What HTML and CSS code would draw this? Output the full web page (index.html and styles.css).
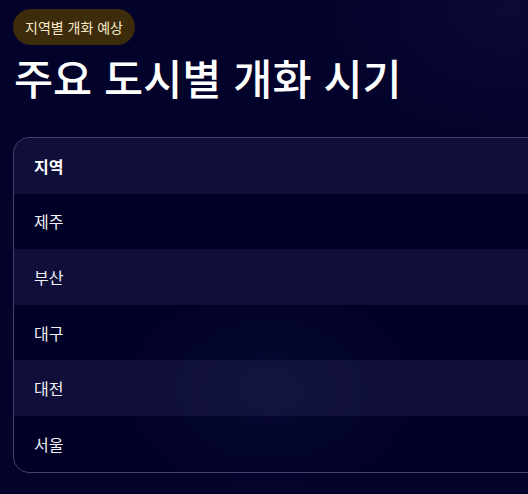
FILE: index.html
```html
<!DOCTYPE html>
<html lang="ko">
<head>
<meta charset="utf-8">
<link rel="stylesheet" href="styles.css">
</head>
<body>
<main class="page">
  <span class="badge">지역별 개화 예상</span>
  <h1 class="title">주요 도시별 개화 시기</h1>
  <div class="card">
    <table class="table">
      <thead>
        <tr><th>지역</th><th></th></tr>
      </thead>
      <tbody>
        <tr><td>제주</td><td></td></tr>
        <tr><td>부산</td><td></td></tr>
        <tr><td>대구</td><td></td></tr>
        <tr><td>대전</td><td></td></tr>
        <tr><td>서울</td><td></td></tr>
      </tbody>
    </table>
  </div>
</main>
</body>
</html>
```
FILE: styles.css
```css
html, body {
  margin: 0;
  padding: 0;
  overflow: hidden;
}
body {
  width: 528px;
  height: 494px;
  background-color: #02022a;
  background-image:
    radial-gradient(ellipse 150px 110px at 270px 390px, rgba(40, 50, 110, 0.2), rgba(40, 50, 110, 0) 100%),
    radial-gradient(ellipse 200px 140px at 510px 10px, rgba(40, 30, 90, 0.25), rgba(40, 30, 90, 0) 100%);
  font-family: "Noto Sans CJK KR", "Noto Sans", sans-serif;
  color: #ffffff;
}
.page {
  padding: 9px 0 0 13px;
  display: flex;
  flex-direction: column;
  align-items: flex-start;
}
.badge {
  display: inline-flex;
  align-items: center;
  height: 36px;
  padding: 0 12px;
  border-radius: 18px;
  background: #3d2c0b;
  color: #f6e9cc;
  font-size: 14px;
  line-height: 1;
}
.title {
  margin: 6px 0 0 1px;
  font-size: 42.5px;
  font-weight: 500;
  line-height: 52px;
  letter-spacing: 0;
}
.card {
  margin-top: 34px;
  width: 620px;
  border: 1px solid rgba(190, 190, 230, 0.35);
  border-radius: 16px;
  overflow: hidden;
}
.table {
  width: 100%;
  border-collapse: collapse;
}
.table th, .table td {
  text-align: left;
  padding: 0 0 0 20px;
  font-size: 16px;
  height: 55.6px;
  color: #f1f1f7;
}
.table th {
  font-weight: 700;
  color: #ffffff;
}
.table thead tr {
  background: rgba(30, 30, 75, 0.45);
}
.table tbody tr:nth-child(even) {
  background: rgba(30, 30, 75, 0.45);
}
.table tbody tr:nth-child(odd) {
  background: rgba(0, 0, 30, 0.25);
}
```
